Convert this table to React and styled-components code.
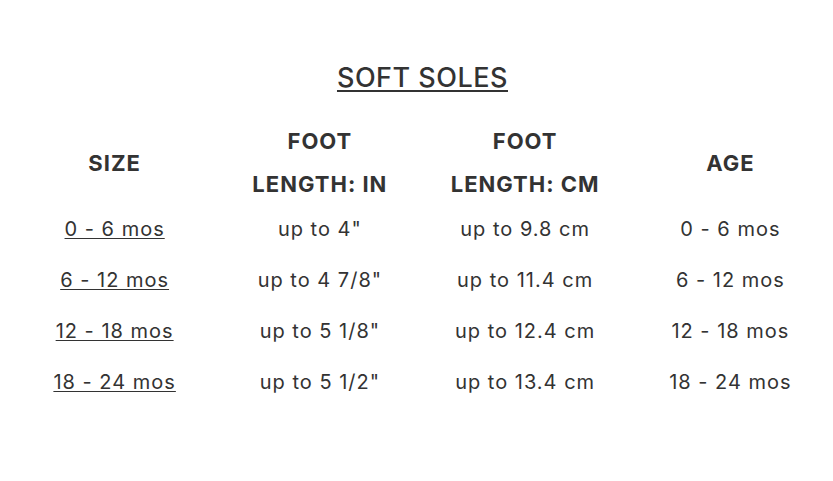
import React from "react";
import styled, { createGlobalStyle } from "styled-components";

const Global = createGlobalStyle`
  html, body { margin: 0; padding: 0; background: #fff; }
  body { font-family: "Inter", "Liberation Sans", sans-serif; color: #333; }
`;

const Page = styled.div`
  padding: 56px 0 0 12px;
  width: 821px;
`;

const Title = styled.h2`
  margin: 0 0 20px;
  text-align: center;
  font-size: 27px;
  font-weight: 500;
  letter-spacing: 0.5px;
  text-decoration: underline;
  text-underline-offset: 3px;
  text-decoration-thickness: 2px;
  line-height: 44px;
`;

const Table = styled.table`
  width: 100%;
  border-collapse: collapse;
  table-layout: fixed;
`;

const Th = styled.th`
  font-size: 22px;
  font-weight: 700;
  line-height: 43px;
  letter-spacing: 1px;
  text-align: center;
  vertical-align: middle;
  padding: 0;
`;

const Td = styled.td`
  font-size: 20px;
  font-weight: 400;
  text-align: center;
  line-height: 27px;
  letter-spacing: 1px;
  padding: 10px 0 14px;
  text-decoration: ${(p) => (p.$link ? "underline" : "none")};
  text-underline-offset: 2px;
  text-decoration-thickness: 1px;
`;

const rows = [
  ["0 - 6 mos", 'up to 4"', "up to 9.8 cm", "0 - 6 mos"],
  ["6 - 12 mos", 'up to 4 7/8"', "up to 11.4 cm", "6 - 12 mos"],
  ["12 - 18 mos", 'up to 5 1/8"', "up to 12.4 cm", "12 - 18 mos"],
  ["18 - 24 mos", 'up to 5 1/2"', "up to 13.4 cm", "18 - 24 mos"],
];

export default function App() {
  return (
    <>
      <Global />
      <Page>
        <Title>SOFT SOLES</Title>
        <Table>
          <thead>
            <tr>
              <Th>SIZE</Th>
              <Th>FOOT<br />LENGTH: IN</Th>
              <Th>FOOT<br />LENGTH: CM</Th>
              <Th>AGE</Th>
            </tr>
          </thead>
          <tbody>
            {rows.map((r) => (
              <tr key={r[0]}>
                {r.map((c, i) => (
                  <Td key={i} $link={i === 0}>{c}</Td>
                ))}
              </tr>
            ))}
          </tbody>
        </Table>
      </Page>
    </>
  );
}
